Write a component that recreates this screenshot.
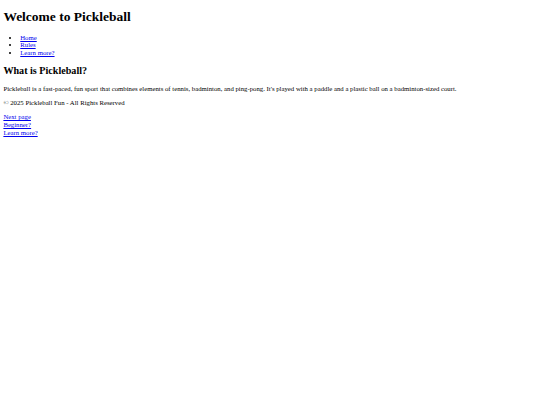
import React from 'react';

// Plain document page, laid out with browser-default spacing at 0.42 scale
const linkCls = 'text-[#0000ee] underline';

const App: React.FC = () => {
    return (
        <div className="m-[3.375px] font-['Liberation_Serif',serif] text-[6.75px] leading-[7.6px] text-black">
            <header>
                <h1 className="text-[13.5px] leading-[15.5px] font-bold my-[9.045px]">Welcome to Pickleball</h1>
                <nav>
                    <ul className="list-disc my-[6.75px] pl-[16.875px]">
                        <li><a href="#" className={linkCls}>Home</a></li>
                        <li><a href="#" className={linkCls}>Rules</a></li>
                        <li><a href="#" className={linkCls}>Learn more?</a></li>
                    </ul>
                </nav>
            </header>
            <main>
                <section>
                    <h2 className="text-[10.125px] leading-[11.6px] font-bold my-[8.404px]">What is Pickleball?</h2>
                    <p className="my-[6.75px]">
                        Pickleball is a fast-paced, fun sport that combines elements of tennis, badminton, and ping-pong. It's played with a paddle and a plastic ball on a badminton-sized court.
                    </p>
                </section>
            </main>
            <footer>
                <p className="my-[6.75px]">© 2025 Pickleball Fun - All Rights Reserved</p>
            </footer>
            <div>
                <a href="#" className={linkCls}>Next page</a>
                <br />
                <a href="#" className={linkCls}>Beginner?</a>
                <br />
                <a href="#" className={linkCls}>Learn more?</a>
            </div>
        </div>
    );
};

export default App;
